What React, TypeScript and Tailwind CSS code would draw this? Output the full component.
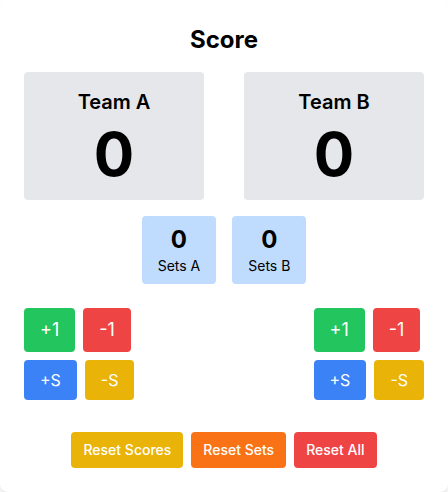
import React, { useState } from "react";

export default function App() {
  const [a, setA] = useState(0);
  const [b, setB] = useState(0);
  const [sa, setSa] = useState(0);
  const [sb, setSb] = useState(0);

  const Controls = ({
    onPlus,
    onMinus,
    onSPlus,
    onSMinus,
  }: {
    onPlus: () => void;
    onMinus: () => void;
    onSPlus: () => void;
    onSMinus: () => void;
  }) => (
    <div className="flex flex-col items-start gap-2">
      <div className="flex gap-2">
        <button onClick={onPlus} className="rounded bg-[#22c55e] px-4 py-2 text-lg text-white">+1</button>
        <button onClick={onMinus} className="rounded bg-[#ef4444] px-4 py-2 text-lg text-white">-1</button>
      </div>
      <div className="flex gap-2">
        <button onClick={onSPlus} className="rounded bg-[#3b82f6] px-4 py-2 text-base text-white">+S</button>
        <button onClick={onSMinus} className="rounded bg-[#eab308] px-4 py-2 text-base text-white">-S</button>
      </div>
    </div>
  );

  return (
    <div
      className="min-h-[492px] w-full rounded-lg bg-white p-6 shadow-md"
      style={{ fontFamily: "Inter, 'Noto Sans', sans-serif" }}
    >
      <h1 className="mb-4 text-center text-2xl font-bold text-black">Score</h1>
      <div className="mb-4 flex justify-between">
        <div className="flex w-[180px] flex-col items-center rounded bg-[#e5e7eb] p-4">
          <div className="text-xl font-semibold">Team A</div>
          <div className="mt-2 text-6xl font-bold">{a}</div>
        </div>
        <div className="flex w-[180px] flex-col items-center rounded bg-[#e5e7eb] p-4">
          <div className="text-xl font-semibold">Team B</div>
          <div className="mt-2 text-6xl font-bold">{b}</div>
        </div>
      </div>
      <div className="mb-6 flex justify-center gap-4">
        <div className="flex flex-col items-center rounded bg-[#bfdbfe] px-4 py-2">
          <div className="text-2xl font-bold">{sa}</div>
          <div className="text-sm">Sets A</div>
        </div>
        <div className="flex flex-col items-center rounded bg-[#bfdbfe] px-4 py-2">
          <div className="text-2xl font-bold">{sb}</div>
          <div className="text-sm">Sets B</div>
        </div>
      </div>
      <div className="mb-8 flex justify-between">
        <Controls
          onPlus={() => setA(a + 1)}
          onMinus={() => setA(Math.max(0, a - 1))}
          onSPlus={() => setSa(sa + 1)}
          onSMinus={() => setSa(Math.max(0, sa - 1))}
        />
        <Controls
          onPlus={() => setB(b + 1)}
          onMinus={() => setB(Math.max(0, b - 1))}
          onSPlus={() => setSb(sb + 1)}
          onSMinus={() => setSb(Math.max(0, sb - 1))}
        />
      </div>
      <div className="flex justify-center gap-2">
        <button onClick={() => { setA(0); setB(0); }} className="rounded bg-[#eab308] px-3 py-2 text-sm font-medium text-white">Reset Scores</button>
        <button onClick={() => { setSa(0); setSb(0); }} className="rounded bg-[#f97316] px-3 py-2 text-sm font-medium text-white">Reset Sets</button>
        <button onClick={() => { setA(0); setB(0); setSa(0); setSb(0); }} className="rounded bg-[#ef4444] px-3 py-2 text-sm font-medium text-white">Reset All</button>
      </div>
    </div>
  );
}
